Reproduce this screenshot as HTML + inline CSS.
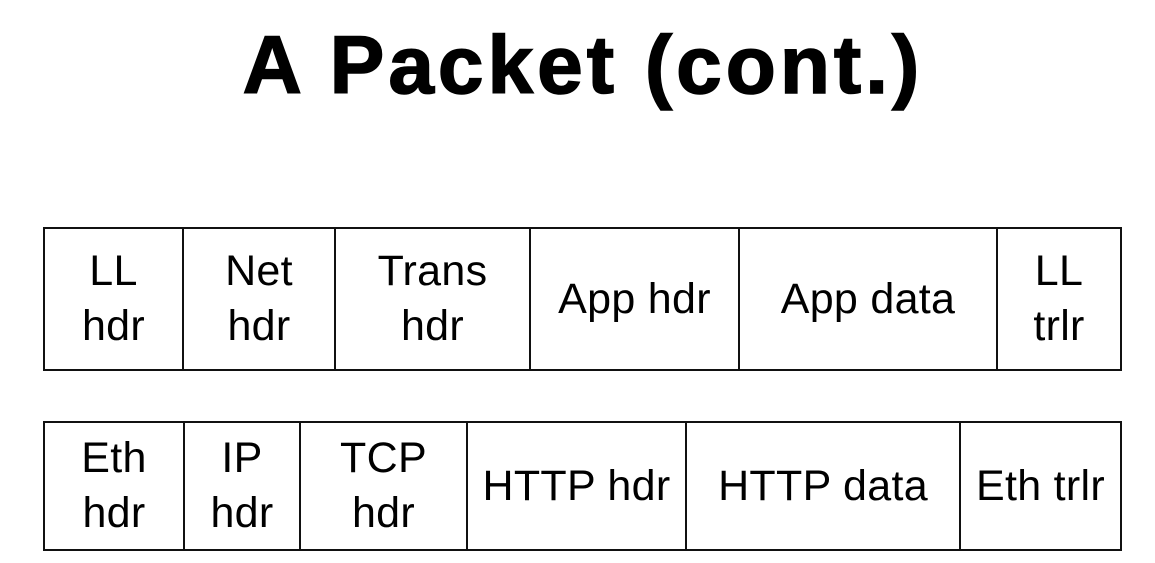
<!DOCTYPE html>
<html><head><style>
body{margin:0;width:1155px;height:563px;background:#fff;position:relative;overflow:hidden;font-family:"Liberation Sans",sans-serif;color:#000}
h1{position:absolute;top:19px;left:0;width:1166px;text-align:center;margin:0;font-size:82px;font-weight:bold;letter-spacing:4px;-webkit-text-stroke:1.5px #000}
.c{position:absolute;box-sizing:border-box;border:2px solid #111;display:flex;align-items:center;justify-content:center;text-align:center;font-size:43px;line-height:55px;letter-spacing:0.3px}
</style></head><body>
<h1>A Packet (cont.)</h1>
<div class="c" style="left:43px;top:227px;width:141px;height:144px">LL<br>hdr</div>
<div class="c" style="left:182px;top:227px;width:154px;height:144px">Net<br>hdr</div>
<div class="c" style="left:334px;top:227px;width:197px;height:144px">Trans<br>hdr</div>
<div class="c" style="left:529px;top:227px;width:211px;height:144px">App hdr</div>
<div class="c" style="left:738px;top:227px;width:260px;height:144px">App data</div>
<div class="c" style="left:996px;top:227px;width:126px;height:144px">LL<br>trlr</div>
<div class="c" style="left:43px;top:421px;width:142px;height:130px">Eth<br>hdr</div>
<div class="c" style="left:183px;top:421px;width:118px;height:130px">IP<br>hdr</div>
<div class="c" style="left:299px;top:421px;width:169px;height:130px">TCP<br>hdr</div>
<div class="c" style="left:466px;top:421px;width:221px;height:130px">HTTP hdr</div>
<div class="c" style="left:685px;top:421px;width:276px;height:130px">HTTP data</div>
<div class="c" style="left:959px;top:421px;width:163px;height:130px">Eth trlr</div>
</body></html>
